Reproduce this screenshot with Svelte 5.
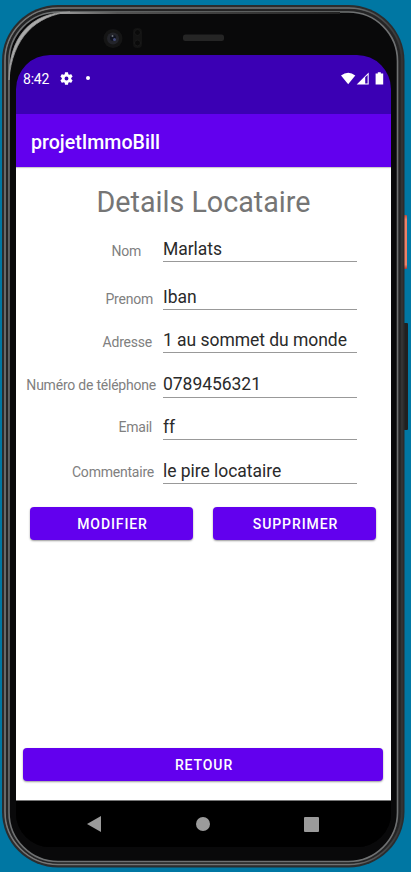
<script>
  const fields = [
    { label: 'Nom', value: 'Marlats', height: 43, inset: 22, drop: 1, gap: 2 },
    { label: 'Prenom', value: 'Iban', height: 48, inset: 10, drop: 1, gap: 2 },
    { label: 'Adresse', value: '1 au sommet du monde', height: 43, inset: 11, drop: 1, gap: 2 },
    { label: 'Numéro de téléphone', value: '0789456321', height: 45, inset: 7, drop: -1, gap: 3 },
    { label: 'Email', value: 'ff', height: 42, inset: 11, drop: -1, gap: 2 },
    { label: 'Commentaire', value: 'le pire locataire', height: 44, inset: 9, drop: 0, gap: 2 }
  ];
</script>

<div class="desk">
  <svg class="frame" width="411" height="872" viewBox="0 0 411 872" aria-hidden="true">
    <defs>
      <linearGradient id="power" x1="0" x2="0" y1="0" y2="1">
        <stop offset="0" stop-color="#c04a3c" />
        <stop offset=".08" stop-color="#ec8168" />
        <stop offset=".92" stop-color="#ec8168" />
        <stop offset="1" stop-color="#b9352c" />
      </linearGradient>
      <linearGradient id="shine" gradientUnits="userSpaceOnUse" x1="62" x2="340" y1="0" y2="0">
        <stop offset="0" stop-color="#999" />
        <stop offset=".2" stop-color="#555" />
        <stop offset="1" stop-color="#222" />
      </linearGradient>
      <linearGradient id="edge" gradientUnits="userSpaceOnUse" x1="0" x2="411" y1="0" y2="0">
        <stop offset="0" stop-color="#777" />
        <stop offset=".85" stop-color="#707273" />
        <stop offset="1" stop-color="#2a2b2b" />
      </linearGradient>
    </defs>
    <rect x="402" y="215" width="5" height="54" rx="1" fill="url(#power)" />
    <rect x="402" y="323" width="6" height="107" rx="1" fill="#202020" />
    <rect x="2" y="5" width="402.500" height="862.500" rx="56" fill="#2b2c2d" />
    <rect x="5" y="8" width="397" height="856.500" rx="53" fill="none" stroke="url(#edge)" stroke-width="1.600" />
    <rect x="7" y="10" width="392.500" height="852.500" rx="51" fill="none" stroke="#242425" stroke-width="2" />
    <rect x="9" y="12" width="388.500" height="849.500" rx="49" fill="#09090a" stroke="#6f7172" stroke-width="1.600" />
    <path d="M60 13H340" fill="none" stroke="url(#shine)" stroke-width="1.800" />
    <path d="M9 80C8.500 38 30 12 70 12C36 15 12 38 9 80Z" fill="#aaa" stroke="#999" stroke-width=".8" />
    <circle cx="113" cy="38.500" r="9.500" fill="#151515" />
    <circle cx="113" cy="38.500" r="6" fill="#23242a" />
    <circle cx="113" cy="38" r="3" fill="#10131e" />
    <circle cx="114.500" cy="39.500" r="1.500" fill="#444b78" />
    <circle cx="112.500" cy="36" r="1" fill="#71757a" />
    <rect x="133" y="28" width="9" height="20" rx="4" fill="#131313" />
    <circle cx="137.500" cy="32.500" r="3" fill="#0a0a0a" stroke="#1a1a1a" />
    <circle cx="137.500" cy="43" r="3" fill="#0a0a0a" stroke="#1a1a1a" />
    <rect x="183" y="34.500" width="41" height="6.500" rx="2.500" fill="#252525" />
  </svg>

  <div class="screen">
    <div class="status">
      <span class="time">8:42</span>
      <svg class="gear" width="13" height="13" viewBox="2 2 20 20"><path fill="#fff" d="M19.140 12.940c.04-.3.060-.61.060-.94s-.02-.64-.07-.94l2.030-1.580a.49.490 0 0 0 .12-.61l-1.920-3.320a.49.490 0 0 0-.59-.22l-2.390.96a7 7 0 0 0-1.620-.94l-.36-2.540A.48.480 0 0 0 13.920 2.400h-3.840a.47.470 0 0 0-.47.410l-.36 2.540c-.59.240-1.130.57-1.620.94l-2.390-.96a.48.480 0 0 0-.59.220L2.740 8.870a.47.470 0 0 0 .12.610l2.030 1.580a6 6 0 0 0 0 1.880l-2.030 1.580a.49.490 0 0 0-.12.610l1.920 3.320c.12.220.37.290.59.220l2.390-.96c.5.380 1.030.7 1.620.94l.36 2.540c.05.240.24.410.48.410h3.840c.24 0 .44-.17.470-.41l.36-2.540a7 7 0 0 0 1.620-.94l2.390.96c.22.080.47 0 .59-.22l1.920-3.320a.47.470 0 0 0-.12-.61zM12 15a3 3 0 1 1 0-6 3 3 0 0 1 0 6z" /></svg>
      <i class="dot"></i>
      <svg class="signals" width="43" height="13" viewBox="0 0 43 13">
        <path fill="#fff" d="M0 3.500Q7.200-2.200 14.300 3.500L7.200 12.200z" />
        <path fill="#fff" d="M27.700.5V12.500H15.700z" />
        <path fill="#3b00b4" d="M24.200 5.300L26.600 3V11.400H24.200z" />
        <path fill="#fff" d="M34.600 1.400H36.800V.2H39.800V1.400H42.200V12.500H34.600z" />
      </svg>
    </div>

    <header>projetImmoBill</header>

    <main>
      <h1>Details Locataire</h1>
      <div class="form">
        {#each fields as field}
          <div class="row" style="height: {field.height}px">
            <span class="label" style="padding-right: {field.inset}px; margin-bottom: {5 - field.drop}px">{field.label}</span>
            <span class="value" style="padding-bottom: {field.gap}px">{field.value}</span>
          </div>
        {/each}
      </div>
      <div class="actions">
        <button>MODIFIER</button>
        <button>SUPPRIMER</button>
      </div>
      <button class="back">RETOUR</button>
    </main>

    <nav>
      <svg width="14" height="16" viewBox="0 0 14 16"><path d="M0 8L14 0V16z" fill="#9b9b9b" /></svg>
      <svg width="14" height="14" viewBox="0 0 14 14"><circle cx="7" cy="7" r="7" fill="#9b9b9b" /></svg>
      <svg class="recents" width="15" height="15" viewBox="0 0 15 15"><rect width="15" height="15" rx="1" fill="#9b9b9b" /></svg>
    </nav>
  </div>
</div>

<style>
  .desk {
    position: relative;
    box-sizing: border-box;
    width: 411px;
    height: 872px;
    padding: 55px 20px 25px 16px;
    overflow: hidden;
    background: #0077a3;
    font-family: Roboto, sans-serif;
  }
  .frame {
    position: absolute;
    inset: 0;
  }
  .screen {
    position: relative;
    display: flex;
    flex-direction: column;
    width: 375px;
    height: 792px;
    overflow: hidden;
    border-radius: 34px;
    background: #000;
  }
  .status {
    box-sizing: border-box;
    display: flex;
    align-items: center;
    height: 59px;
    padding: 0 7px 13px 7px;
    background: #3b00b4;
    color: #fff;
  }
  .time {
    width: 37px;
    font-size: 14px;
    letter-spacing: -.2px;
    line-height: 16px;
    padding-top: 2px;
  }
  .gear { margin-right: 12.500px; }
  .dot {
    width: 4px;
    height: 4px;
    border-radius: 50%;
    background: #fff;
  }
  .signals { margin-left: auto; }
  header {
    height: 53px;
    flex: none;
    padding-left: 15px;
    background: #6200ee;
    color: #fff;
    font-size: 19.600px;
    font-weight: 500;
    line-height: 57px;
    box-shadow: 0 1px 1px #0003;
    z-index: 1;
  }
  main {
    display: flex;
    flex-direction: column;
    flex: 1;
    border-bottom: 1px solid #777;
    background: #fff;
  }
  h1 {
    margin: 18px 0 0;
    height: 34px;
    color: #757575;
    font-size: 28.700px;
    font-weight: 400;
    line-height: 34px;
    text-align: center;
  }
  .row {
    box-sizing: border-box;
    display: grid;
    grid-template-columns: 147px 194px;
    align-items: end;
  }
  .label {
    color: #808080;
    font-size: 14px;
    letter-spacing: -.22px;
    line-height: 14px;
    text-align: right;
    white-space: nowrap;
  }
  .value {
    border-bottom: 1px solid #999;
    color: #2a2a2a;
    font-size: 17.500px;
    letter-spacing: -.04px;
    line-height: 20px;
    white-space: nowrap;
  }
  .actions {
    display: grid;
    grid-template-columns: 163px 163px;
    gap: 20px;
    padding: 23px 14px 0;
  }
  button {
    height: 33px;
    padding: 0 0 0 2px;
    border: 0;
    border-radius: 4px;
    background: #6200ee;
    box-shadow: 0 1px 2px #0006;
    color: #fff;
    font: 500 14px/35px Roboto, sans-serif;
    letter-spacing: .9px;
  }
  .back { margin: auto 8px 19px 7px; }
  nav {
    display: flex;
    align-items: center;
    gap: 95px;
    box-sizing: border-box;
    height: 46px;
    flex: none;
    padding-left: 71px;
    background: #000;
  }
  .recents { margin-left: -1.500px; }
</style>
